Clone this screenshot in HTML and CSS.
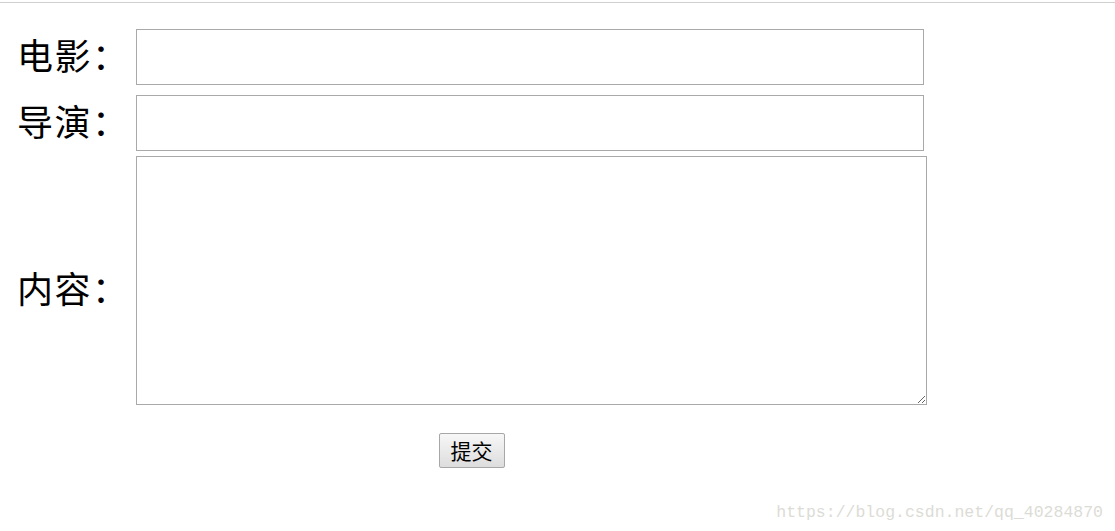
FILE: index.html
```html
<!DOCTYPE html>
<html lang="zh-CN">
<head>
  <meta charset="UTF-8">
  <title>电影评论</title>
  <link rel="stylesheet" href="styles.css">
</head>
<body>
  <div class="topline"></div>

  <!-- Review form -->
  <form class="review-form">
    <label class="label" for="movie">电影：</label>
    <input class="field" id="movie" type="text">

    <label class="label" for="director">导演：</label>
    <input class="field" id="director" type="text">

    <label class="label label-content" for="content">内容：</label>
    <textarea class="field-area" id="content"></textarea>

    <div class="actions">
      <button type="button" class="submit">提交</button>
    </div>
  </form>

  <div class="watermark">https://blog.csdn.net/qq_40284870</div>
</body>
</html>
```

FILE: styles.css
```css
html, body {
  margin: 0;
  padding: 0;
  background: #fff;
  height: 100%;
}

body {
  position: relative;
  font-family: "Noto Sans CJK SC", "Noto Sans", sans-serif;
  color: #000;
  overflow: hidden;
}

.topline {
  height: 2px;
  border-bottom: 1px solid #cfcfcf;
}

.review-form {
  display: grid;
  grid-template-columns: 118px 791px;
  row-gap: 10px;
  padding: 26px 0 0 18px;
  align-items: center;
}

.label {
  font-size: 36px;
  line-height: 40px;
  letter-spacing: 1.5px;
  white-space: nowrap;
  margin-left: -1px;
  padding-bottom: 6px;
}

.label-content {
  align-self: center;
  margin-top: 13px;
}

.field {
  width: 788px;
  height: 56px;
  box-sizing: border-box;
  border: 1px solid #a9a9a9;
  margin: 0;
  padding: 2px 4px;
  font-size: 16px;
  outline: none;
}

.field-area {
  width: 791px;
  height: 249px;
  box-sizing: border-box;
  border: 1px solid #a9a9a9;
  margin: -5px 0 0 0;
  padding: 2px;
  font-size: 16px;
  outline: none;
  resize: both;
  display: block;
}

.actions {
  grid-column: 1 / 3;
  display: flex;
  justify-content: center;
  margin-top: 18px;
}

.submit {
  width: 66px;
  height: 35px;
  margin-left: -2px;
  padding: 0;
  font-family: "Noto Sans CJK SC", sans-serif;
  font-size: 21px;
  line-height: 1;
  color: #000;
  background: linear-gradient(#f7f7f7, #dddddd);
  border: 1px solid #a7a7a7;
  border-radius: 2px;
  cursor: pointer;
}

.watermark {
  position: absolute;
  right: 12px;
  bottom: 9px;
  font-family: "Liberation Mono", monospace;
  font-size: 16.5px;
  color: #dcdcd6;
}
```
